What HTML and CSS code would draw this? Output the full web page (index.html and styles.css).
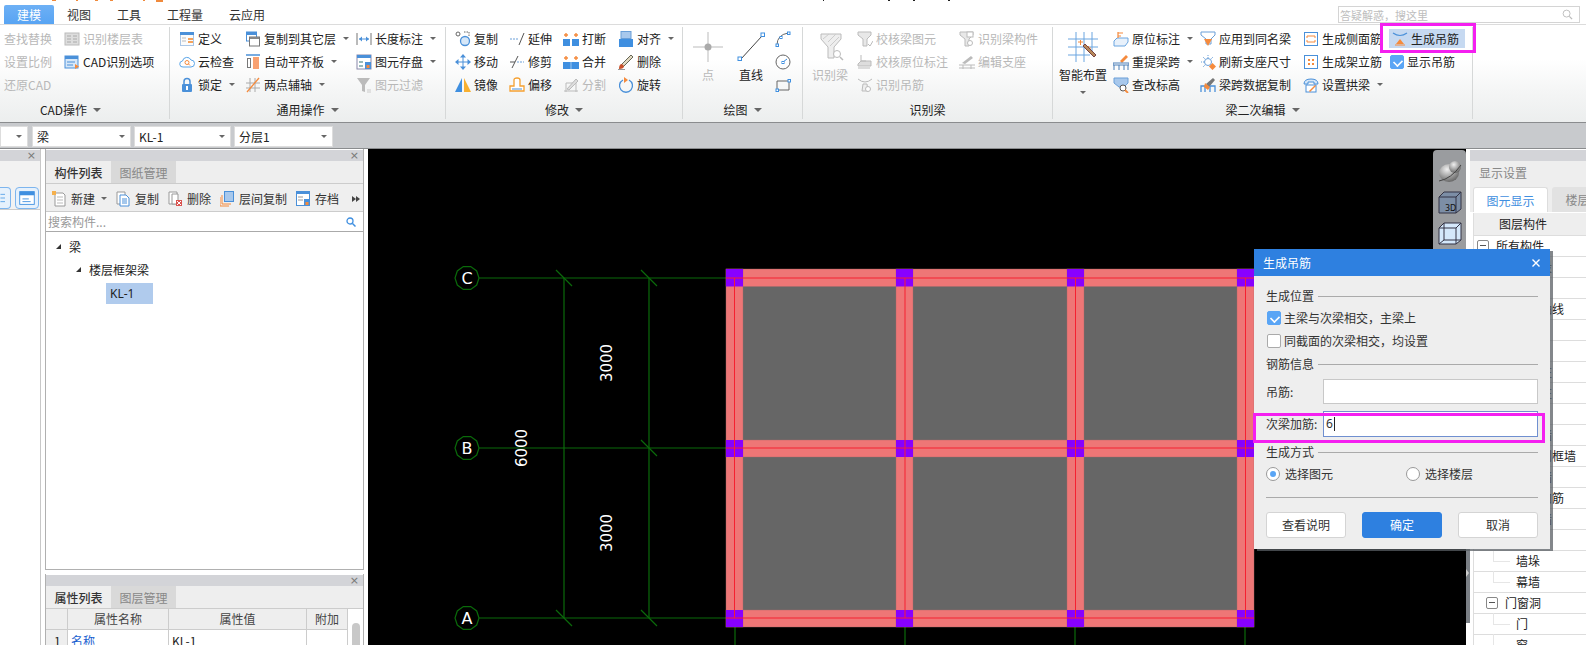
FILE: index.html
```html
<!DOCTYPE html>
<html lang="zh">
<head>
<meta charset="utf-8">
<title>生成吊筋</title>
<link rel="stylesheet" href="styles.css">
</head>
<body>
<svg class="titlebits" viewBox="0 0 1586 3"><path fill="#f08a3c" d="M52 0h4v1h-4zM76 0h2v1h-2zM95 0h3v1h-3zM110 0h3v1h-3zM143 0h2v1h-2zM156 0h7v2h-7z"/><path fill="#222" d="M823 0h1v1h-1zM888 0h2v1h-2zM913 0h2v1h-2zM948 0h2v1h-2z"/></svg>

<header class="tabsbar">
  <div class="tab on">建模</div><div class="tab">视图</div><div class="tab">工具</div><div class="tab">工程量</div><div class="tab">云应用</div>
  <div class="ask"><span>答疑解惑，搜这里</span><svg class="askic" viewBox="0 0 12 12"><circle cx="5" cy="5" r="3.8" fill="none" stroke="#bbb"/><path d="M8 8l3 3" stroke="#bbb" stroke-width="1.4"/></svg></div>
</header>

<section class="ribbon">
  <div class="group g1">
    <div class="rows">
      <div class="col c64">
        <div class="it dis"><span>查找替换</span></div>
        <div class="it dis"><span>设置比例</span></div>
        <div class="it dis"><span>还原CAD</span></div>
      </div>
      <div class="col">
        <div class="it dis"><svg class="ic" viewBox="0 0 16 16"><rect x="1" y="2" width="14" height="12" fill="#ddd" stroke="#bbb"/><path d="M3 5h4M3 8h4M3 11h4M9 5h4M9 8h4M9 11h4" stroke="#aaa"/></svg><span>识别楼层表</span></div>
        <div class="it"><svg class="ic" viewBox="0 0 16 16"><rect x="1" y="2" width="13" height="12" fill="#d6e7f8" stroke="#4a90d9"/><path d="M1 2h13v3H1z" fill="#4a90d9"/><path d="M3 8h8M3 11h6" stroke="#4a90d9"/><path d="M11 10l4 2.500-4 2.500z" fill="#f58a3c"/></svg><span>CAD识别选项</span></div>
      </div>
    </div>
    <div class="glabel gl1">CAD操作<i class="ar lab"></i></div>
  </div>

  <div class="group g2">
    <div class="rows">
      <div class="col c66">
        <div class="it"><svg class="ic" viewBox="0 0 16 16"><rect x="1.500" y="1.500" width="13" height="13" fill="#fbfbfb" stroke="#aac6e6"/><path d="M1 1h14v3H1z" fill="#4a90d9"/><path d="M9 7h5v2H9zM9 10h5v2H9z" fill="#f5a35c"/><path d="M3 7h4M3 10h4" stroke="#bbb"/></svg><span>定义</span></div>
        <div class="it"><svg class="ic" viewBox="0 0 16 16"><path d="M4 13a3 3 0 0 1-.500-6 4.500 4.500 0 0 1 8.500-1 3.500 3.500 0 0 1 0 7z" fill="#fff" stroke="#5aa5e8"/><circle cx="8" cy="8.500" r="2" fill="none" stroke="#f58a3c"/><path d="M9.500 10l1.500 1.500" stroke="#f58a3c"/></svg><span>云检查</span></div>
        <div class="it"><svg class="ic" viewBox="0 0 16 16"><path d="M5 7V4.500a3 3 0 0 1 6 0V7" fill="none" stroke="#4a90d9" stroke-width="1.500"/><rect x="3" y="7" width="10" height="8" rx="1" fill="#4a90d9"/><rect x="7" y="9" width="2" height="4" fill="#fff"/></svg><span>锁定</span><i class="ar"></i></div>
      </div>
      <div class="col c111">
        <div class="it"><svg class="ic" viewBox="0 0 16 16"><rect x="1.500" y="1" width="10" height="9" fill="#fff" stroke="#4a90d9"/><path d="M1 1h11v3H1z" fill="#4a90d9"/><rect x="4.500" y="6" width="10" height="9" fill="#fff" stroke="#777"/><path d="M5 6h9v2H5z" fill="#888"/></svg><span>复制到其它层</span><i class="ar"></i></div>
        <div class="it"><svg class="ic" viewBox="0 0 16 16"><path d="M1 1h14" stroke="#4a90d9" stroke-width="1.500"/><rect x="2.500" y="4.500" width="3" height="9" fill="#fff" stroke="#777"/><rect x="8" y="3" width="6" height="12" fill="#f8a070"/></svg><span>自动平齐板</span><i class="ar"></i></div>
        <div class="it"><svg class="ic" viewBox="0 0 16 16"><path d="M1 6h14M1 11h14M5 1v14M10 1v14" stroke="#aaa"/><path d="M2 15L14 1" stroke="#f58a3c" stroke-width="1.300"/></svg><span>两点辅轴</span><i class="ar"></i></div>
      </div>
      <div class="col">
        <div class="it"><svg class="ic" viewBox="0 0 16 16"><path d="M1 2v12M15 2v12" stroke="#777"/><path d="M3 8h10" stroke="#4a90d9"/><path d="M3 8l3-2.500v5zM13 8l-3-2.500v5z" fill="#4a90d9"/></svg><span>长度标注</span><i class="ar"></i></div>
        <div class="it"><svg class="ic" viewBox="0 0 16 16"><rect x="1" y="1" width="14" height="14" fill="#fff" stroke="#88a"/><path d="M1 1h14v3H1z" fill="#4a90d9"/><path d="M3 7h4v2H3zM3 11h4v2H3z" fill="#9bb"/><rect x="9" y="8" width="6" height="7" fill="#4a90d9"/><rect x="10.500" y="11" width="3" height="3" fill="#f58a3c"/></svg><span>图元存盘</span><i class="ar"></i></div>
        <div class="it dis"><svg class="ic" viewBox="0 0 16 16"><path d="M1 1h13L9 8v7l-3-1V8z" fill="#bbb"/><path d="M11 13h4M11 15h4" stroke="#ccc"/></svg><span>图元过滤</span></div>
      </div>
    </div>
    <div class="glabel">通用操作<i class="ar lab"></i></div>
  </div>

  <div class="group g3">
    <div class="rows">
      <div class="col c54">
        <div class="it"><svg class="ic" viewBox="0 0 16 16"><circle cx="10" cy="10" r="4.500" fill="#d6e7f8" stroke="#4a90d9" stroke-width="1.300"/><circle cx="3" cy="3" r="2" fill="none" stroke="#666"/><path d="M9 1h5v4" fill="none" stroke="#666" stroke-dasharray="1.500 1"/></svg><span>复制</span></div>
        <div class="it"><svg class="ic" viewBox="0 0 16 16"><path d="M8 3v10M3 8h10" stroke="#4a90d9"/><path d="M8 0l3 3.500H5zM8 16l3-3.500H5zM0 8l3.500-3v6zM16 8l-3.500-3v6z" fill="#4a90d9"/></svg><span>移动</span></div>
        <div class="it"><svg class="ic" viewBox="0 0 16 16"><path d="M7 1v14H0z" fill="#3f8fe0"/><path d="M9 1v14h7z" fill="#f8b030"/></svg><span>镜像</span></div>
      </div>
      <div class="col c54">
        <div class="it"><svg class="ic" viewBox="0 0 16 16"><path d="M1 8h9" stroke="#6a9fd8" stroke-dasharray="2 1"/><path d="M10 14l5-12" stroke="#555"/></svg><span>延伸</span></div>
        <div class="it"><svg class="ic" viewBox="0 0 16 16"><path d="M1 8h5" stroke="#555"/><path d="M8 8h7" stroke="#6a9fd8" stroke-dasharray="2 1"/><path d="M3 14l6-12" stroke="#555"/></svg><span>修剪</span></div>
        <div class="it"><svg class="ic" viewBox="0 0 16 16"><path d="M1 14V9h4V3q0-2 3-2t3 2v6h4v5z" fill="#fff" stroke="#f5a030" stroke-width="1.300"/><path d="M3 12h10" stroke="#4a90d9"/></svg><span>偏移</span></div>
      </div>
      <div class="col c55">
        <div class="it"><svg class="ic" viewBox="0 0 16 16"><path d="M0 8h7v7H0zM9 8h7v7H9z" fill="#3f8fe0"/><path d="M3 2v4M1 4h4M13 2v4M11 4h4" stroke="#f58a3c" stroke-width="1.400"/></svg><span>打断</span></div>
        <div class="it"><svg class="ic" viewBox="0 0 16 16"><path d="M0 8h16v7H0z" fill="#3f8fe0"/><path d="M8 8v7" stroke="#9cc6f0"/><path d="M3 2v4M1 4h4M13 2v4M11 4h4" stroke="#f58a3c" stroke-width="1.400"/></svg><span>合并</span></div>
        <div class="it dis"><svg class="ic" viewBox="0 0 16 16"><path d="M1 14h14M3 15V6h10v9" fill="none" stroke="#bbb"/><path d="M4 12L13 2l2 2-9 9z" fill="#ddd" stroke="#bbb"/></svg><span>分割</span></div>
      </div>
      <div class="col">
        <div class="it"><svg class="ic" viewBox="0 0 16 16"><rect x="3" y="0.500" width="10" height="7" fill="#a8c8ec" stroke="#6a9fd8"/><rect x="1" y="8" width="14" height="8" fill="#3f8fe0"/></svg><span>对齐</span><i class="ar"></i></div>
        <div class="it"><svg class="ic" viewBox="0 0 16 16"><path d="M3 11L13 1l2 2L5 13z" fill="#e0d8c0" stroke="#665"/><path d="M1 15q0-5 3-5l2 2q0 3-5 3z" fill="#c8502a"/><path d="M0 16h7" stroke="#333"/></svg><span>删除</span></div>
        <div class="it"><svg class="ic" viewBox="0 0 16 16"><path d="M5 3a6.500 6.500 0 1 0 6 0" fill="none" stroke="#4a90d9" stroke-width="1.300"/><path d="M6 0v6l4-3z" fill="#f58a3c"/></svg><span>旋转</span></div>
      </div>
    </div>
    <div class="glabel">修改<i class="ar lab"></i></div>
  </div>

  <div class="group g4">
    <div class="rows">
      <div class="big w40 dis">
        <svg class="bigic" viewBox="0 0 30 30"><path d="M15 0v30M0 15h30" stroke="#bbb"/><circle cx="15" cy="15" r="3.500" fill="#aaa"/></svg>
        <span>点</span>
      </div>
      <div class="big w40 gapl3">
        <svg class="bigic" viewBox="0 0 30 30"><path d="M5 27L26 4" stroke="#444"/><rect x="2" y="25" width="3.500" height="3.500" fill="#fff" stroke="#3f8fe0"/><rect x="25" y="1" width="3.500" height="3.500" fill="#fff" stroke="#3f8fe0"/></svg>
        <span>直线</span>
      </div>
      <div class="col gapl4">
        <div class="it"><svg class="ic" viewBox="0 0 16 16"><path d="M2 14Q2 4 13 2" fill="none" stroke="#666"/><rect x="1" y="13" width="2.500" height="2.500" fill="#fff" stroke="#3f8fe0"/><rect x="12.500" y="1" width="2.500" height="2.500" fill="#fff" stroke="#3f8fe0"/><rect x="5" y="5.500" width="2" height="2" fill="#fff" stroke="#3f8fe0"/></svg></div>
        <div class="it"><svg class="ic" viewBox="0 0 16 16"><circle cx="8" cy="8" r="7" fill="none" stroke="#666"/><path d="M8 8l4-3" stroke="#3f8fe0"/><rect x="7" y="7.500" width="2" height="2" fill="#fff" stroke="#3f8fe0"/></svg></div>
        <div class="it"><svg class="ic" viewBox="0 0 16 16"><path d="M2 4h12v9H2z" fill="none" stroke="#666"/><rect x="1" y="12" width="2.500" height="2.500" fill="#fff" stroke="#3f8fe0"/><rect x="13" y="2.500" width="2.500" height="2.500" fill="#fff" stroke="#3f8fe0"/></svg></div>
      </div>
    </div>
    <div class="glabel">绘图<i class="ar lab"></i></div>
  </div>

  <div class="group g5">
    <div class="rows">
      <div class="big w36 mr9 dis">
        <svg class="bigic bigfn" viewBox="0 0 30 30"><path d="M6 2h20v5l-7 8v11h-6V15L6 7z" fill="#eee" stroke="#bbb"/><path d="M8 7l6-5M13 10l8-8M15 14l9-9" stroke="#ccc"/><circle cx="22" cy="22" r="3.500" fill="#fff" stroke="#bbb"/><path d="M25 25l3 3" stroke="#bbb" stroke-width="1.500"/></svg>
        <span>识别梁</span>
      </div>
      <div class="col c102">
        <div class="it dis"><svg class="ic" viewBox="0 0 16 16"><path d="M1 1h13v3l-4 4v7H6V8L1 4z" fill="#e8e8e8" stroke="#bbb"/><path d="M11 13l2 2 3-5" fill="none" stroke="#bbb"/></svg><span>校核梁图元</span></div>
        <div class="it dis"><svg class="ic" viewBox="0 0 16 16"><path d="M1 10l3-3h10v5H1z" fill="#ddd" stroke="#bbb"/><path d="M4 1v6h5" fill="none" stroke="#bbb"/><path d="M1 14h12" stroke="#bbb"/></svg><span>校核原位标注</span></div>
        <div class="it dis"><svg class="ic" viewBox="0 0 16 16"><path d="M1 2q7 6 14 0" fill="none" stroke="#bbb"/><path d="M6 7h4l1 7H5z" fill="#eee" stroke="#bbb"/><circle cx="11" cy="12" r="2.500" fill="#fff" stroke="#bbb"/></svg><span>识别吊筋</span></div>
      </div>
      <div class="col">
        <div class="it dis"><svg class="ic" viewBox="0 0 16 16"><path d="M1 1h13v3l-4 4v7H6V8L1 4z" fill="#e8e8e8" stroke="#bbb"/><rect x="8" y="1" width="6" height="5" fill="#fff" stroke="#bbb"/><circle cx="11" cy="12" r="2.500" fill="#fff" stroke="#bbb"/></svg><span>识别梁构件</span></div>
        <div class="it dis"><svg class="ic" viewBox="0 0 16 16"><path d="M3 9l9-7 2 2-8 6z" fill="#bbb"/><path d="M0 11h16M0 14h16M4 11v4M12 11v4" stroke="#bbb"/></svg><span>编辑支座</span></div>
      </div>
    </div>
    <div class="glabel">识别梁</div>
  </div>

  <div class="group g6">
    <div class="rows">
      <div class="big w48 mr6">
        <svg class="bigic" viewBox="0 0 30 30"><path d="M0 7h30M0 15h30M0 23h22M8 0v30M16 0v30M24 0v22" stroke="#6aa5e0"/><path d="M10 10h5M12.500 8v5M18 16h5M20.500 14v5" stroke="#f58a3c"/><path d="M17 12l11 11-2 2-11-11z" fill="#b88a5a" stroke="#744"/></svg>
        <span>智能布置</span>
        <i class="ar under"></i>
      </div>
      <div class="col c87">
        <div class="it"><svg class="ic" viewBox="0 0 16 16"><path d="M1 10l3-3h11v4l-3 4H1z" fill="#e8f1fb" stroke="#6aa5e0"/><path d="M5 1v6M5 2h5M5 5h3" stroke="#f58a3c" stroke-width="1.200" fill="none"/></svg><span>原位标注</span><i class="ar"></i></div>
        <div class="it"><svg class="ic" viewBox="0 0 16 16"><path d="M7 7l6-6 2 2-6 6z" fill="#f58a3c"/><path d="M0 9h16v2H0zM1 11v5M6 11v5M11 11v5M15 11v5" fill="#fff" stroke="#4a7fb8"/></svg><span>重提梁跨</span><i class="ar"></i></div>
        <div class="it"><svg class="ic" viewBox="0 0 16 16"><path d="M1 1h14v5L11 10H6L1 6z" fill="#a8c8ec" stroke="#6a9fd8"/><circle cx="10" cy="11" r="3" fill="#fff" stroke="#555"/><path d="M12 13l3 3" stroke="#f58a3c" stroke-width="1.800"/></svg><span>查改标高</span></div>
      </div>
      <div class="col c103">
        <div class="it"><svg class="ic" viewBox="0 0 16 16"><path d="M1 1h14v3l-4 4v5H6V8L1 4z" fill="#fff" stroke="#6a9fd8"/><path d="M4 8h8l-4 7z" fill="#f58a3c"/></svg><span>应用到同名梁</span></div>
        <div class="it"><svg class="ic" viewBox="0 0 16 16"><path d="M8 1v3M1 8h3M3 3l2 2M13 3l-2 2M3 13l2-2" stroke="#6a9fd8" stroke-dasharray="1 1"/><circle cx="8" cy="8" r="3.500" fill="#fff" stroke="#6a9fd8"/><rect x="10" y="10" width="5" height="5" transform="rotate(45 12.500 12.500)" fill="#f58a3c"/></svg><span>刷新支座尺寸</span></div>
        <div class="it"><svg class="ic" viewBox="0 0 16 16"><path d="M1 15V9h14v6M5 9v6M10 9v6" fill="none" stroke="#4a90d9" stroke-width="1.300"/><path d="M6 7l7-6 2 2-6 7z" fill="#777"/><path d="M5 6l5 4-2 3-4-3z" fill="#f58a3c"/></svg><span>梁跨数据复制</span></div>
      </div>
      <div class="col c86">
        <div class="it"><svg class="ic" viewBox="0 0 16 16"><rect x="1.500" y="1.500" width="13" height="13" fill="#fff" stroke="#4a90d9"/><path d="M4 5h8v2M4 5v2M4 11h8V9M4 11V9" fill="none" stroke="#f58a3c"/></svg><span>生成侧面筋</span></div>
        <div class="it"><svg class="ic" viewBox="0 0 16 16"><rect x="1.500" y="1.500" width="13" height="13" fill="#fff" stroke="#4a90d9"/><path d="M5 5h2v2H5zM9 5h2v2H9zM5 9h2v2H5zM9 9h2v2H9z" fill="#f58a3c"/></svg><span>生成架立筋</span></div>
        <div class="it"><svg class="ic" viewBox="0 0 16 16"><path d="M1 7q0-5 7-5t7 5h-4V5H5v2z" fill="#d6e7f8" stroke="#4a90d9"/><rect x="3" y="8" width="10" height="7" fill="#fff" stroke="#4a90d9"/><path d="M6 14l6-6 1 1-6 6z" fill="#f58a3c"/></svg><span>设置拱梁</span><i class="ar"></i></div>
      </div>
      <div class="col">
        <div class="it hl"><svg class="ic" viewBox="0 0 16 16"><path d="M1 2q7 5 14 0" fill="none" stroke="#4a90d9" stroke-width="1.200"/><path d="M8 8l4 5H4z" fill="#f58a3c"/><path d="M3 14h10" stroke="#f58a3c"/></svg><span>生成吊筋</span></div>
        <div class="it chk"><span class="box on"></span><span>显示吊筋</span></div>
      </div>
    </div>
    <div class="glabel">梁二次编辑<i class="ar lab"></i></div>
  </div>
</section>

<section class="combos">
  <div class="combo cw30"><i class="ar"></i></div>
  <div class="combo cw99"><span>梁</span><i class="ar"></i></div>
  <div class="combo cw97"><span>KL-1</span><i class="ar"></i></div>
  <div class="combo cw99"><span>分层1</span><i class="ar"></i></div>
</section>

<main class="main">
  <aside class="leftdock">
    <div class="phead"><span class="px">×</span></div>
    <div class="ldtools">
      <span class="ldbtn ldbtn1"><svg viewBox="0 0 10 22" class="ldic"><path d="M0 7h5M0 11h5M0 15h5" stroke="#5aa5e8"/></svg></span>
      <span class="ldbtn ldbtn2"><svg viewBox="0 0 24 22" class="ldic2"><rect x="4" y="4" width="16" height="14" fill="#fff" stroke="#3f8fe0"/><path d="M4 4h16v4H4z" fill="#3f8fe0"/><path d="M7 12h7M7 15h9" stroke="#3f8fe0"/></svg></span>
    </div>
  </aside>

  <div class="docks">
    <div class="panel pcomp">
      <div class="phead"><span class="px">×</span></div>
      <div class="ptabs"><div class="ptab on">构件列表</div><div class="ptab">图纸管理</div></div>
      <div class="ptools">
        <div class="tb"><svg class="tic" viewBox="0 0 14 16"><path d="M3 2h8l2 2v11H3z" fill="#fff" stroke="#999"/><path d="M5 6h6M5 9h6M5 12h6" stroke="#bbb"/><path d="M0 0h4v4H0z" fill="#f5b04c"/></svg><span>新建</span><i class="ar"></i></div>
        <div class="tb"><svg class="tic" viewBox="0 0 14 16"><path d="M1 1h8v12H1z" fill="#fff" stroke="#999"/><path d="M4 4h6l3 3v8H4z" fill="#fff" stroke="#4a90d9"/><path d="M6 8h5M6 10h5M6 12h5" stroke="#4a90d9"/></svg><span>复制</span></div>
        <div class="tb"><svg class="tic" viewBox="0 0 14 16"><path d="M1 1h8v12H1z" fill="#fff" stroke="#999"/><path d="M4 3h6v10H4z" fill="#fff" stroke="#999"/><rect x="8" y="9" width="6" height="6" fill="#d9534f"/><path d="M9 10l4 4M13 10l-4 4" stroke="#fff"/></svg><span>删除</span></div>
        <div class="tb"><svg class="tic" viewBox="0 0 14 16"><path d="M0 6v9h9M2 4v9h9" fill="none" stroke="#f58a3c"/><rect x="4.500" y="0.500" width="9" height="10" fill="#a8c8ec" stroke="#4a90d9"/></svg><span>层间复制</span></div>
        <div class="tb"><svg class="tic" viewBox="0 0 14 16"><rect x="0.500" y="0.500" width="13" height="14" fill="#fff" stroke="#4a90d9"/><path d="M0 0h14v3H0z" fill="#4a90d9"/><path d="M2 6h5M2 9h5" stroke="#999"/><rect x="8" y="8" width="6" height="7" fill="#4a90d9"/><rect x="9.500" y="11" width="3" height="3" fill="#f58a3c"/></svg><span>存档</span></div>
        <div class="more"><i class="mtri"></i><i class="mtri"></i></div>
      </div>
      <div class="psearch"><span>搜索构件...</span><svg class="psic" viewBox="0 0 10 10"><circle cx="4" cy="4" r="3" fill="none" stroke="#3f8fe0" stroke-width="1.300"/><path d="M6.500 6.500L9.500 9.500" stroke="#3f8fe0" stroke-width="1.500"/></svg></div>
      <div class="tree">
        <div class="node n0"><i class="tw"></i>梁</div>
        <div class="node n1"><i class="tw"></i>楼层框架梁</div>
        <div class="leaf">KL-1</div>
      </div>
    </div>
    <div class="panel pattr">
      <div class="phead"><span class="px">×</span></div>
      <div class="ptabs"><div class="ptab on">属性列表</div><div class="ptab">图层管理</div></div>
      <div class="attrwrap">
        <div class="attrgrid">
          <div class="th"></div><div class="th">属性名称</div><div class="th">属性值</div><div class="th">附加</div>
          <div class="td tdnum">1</div><div class="td tdlink">名称</div><div class="td">KL-1</div><div class="td"></div>
        </div>
        <div class="scroll"><div class="thumb"></div></div>
      </div>
    </div>
  </div>

  <div class="canvas">
    <svg class="cad" viewBox="368 149 1098 496">
      <defs><polygon id="deca" points="12,0 9.700,7.050 3.700,11.400 -3.700,11.400 -9.700,7.050 -12,0 -9.700,-7.050 -3.700,-11.400 3.700,-11.400 9.700,-7.050" fill="none" stroke="#0a6a0a" stroke-width="1.200"/></defs>
      <g stroke="#0a6a0a" stroke-width="1.200" fill="none">
        <path d="M479 278H726M479 448H726M479 618H726M564 278V618M649 278V618M735 618V645M905 618V645M1075 618V645M1245 618V645"/>
        <path d="M556 270L572 286M641 270L657 286M641 440L657 456M556 610L572 626M641 610L657 626"/>
      </g>
      <use href="#deca" x="467" y="278"/><use href="#deca" x="467" y="448"/><use href="#deca" x="467" y="618"/>
      <g class="axis"><text x="467" y="284">C</text><text x="467" y="454">B</text><text x="467" y="624">A</text></g>
      <g class="dim">
        <text transform="translate(612 363) rotate(-90)">3000</text>
        <text transform="translate(527 448) rotate(-90)">6000</text>
        <text transform="translate(612 533) rotate(-90)">3000</text>
      </g>
      <rect x="726" y="269" width="528" height="358" fill="#666"/>
      <g fill="#ee7676" stroke="#a56a6a" stroke-width="0.400">
        <rect x="726" y="269" width="528" height="17.500"/><rect x="726" y="440" width="528" height="17"/><rect x="726" y="610" width="528" height="17"/>
        <rect x="726" y="269" width="17" height="358"/><rect x="896" y="269" width="17" height="358"/><rect x="1067" y="269" width="17" height="358"/><rect x="1237" y="269" width="17" height="358"/>
      </g>
      <path fill="#8800ff" d="M726 269h17v17.500h-17zM896 269h17v17.500h-17zM1067 269h17v17.500h-17zM1237 269h17v17.500h-17zM726 440h17v17h-17zM896 440h17v17h-17zM1067 440h17v17h-17zM1237 440h17v17h-17zM726 610h17v17h-17zM896 610h17v17h-17zM1067 610h17v17h-17zM1237 610h17v17h-17z"/>
      <path d="M726 278H1254M726 448H1254M726 618H1254M734.500 278V618M905 278V618M1075.500 278V618M1245.500 278V618" stroke="#f52030" stroke-width="1" fill="none"/>
    </svg>
    <div class="sidebar">
      <svg class="sbic" viewBox="0 0 24 24"><defs><radialGradient id="sph" cx="0.400" cy="0.300" r="0.800"><stop offset="0" stop-color="#f0f0f0"/><stop offset="1" stop-color="#555"/></radialGradient></defs><ellipse cx="11" cy="14" rx="10" ry="9" fill="url(#sph)"/><circle cx="17" cy="8" r="6" fill="url(#sph)"/><path d="M1 22q12-2 22-16" fill="none" stroke="#444"/></svg>
      <svg class="sbic" viewBox="0 0 24 24"><path d="M1 7l5-5h17v17l-5 4H1z" fill="#7c8ea6" stroke="#334"/><path d="M1 7h17v16M18 7l5-5" fill="none" stroke="#334"/><text class="s3d" x="7" y="21">3D</text></svg>
      <svg class="sbic" viewBox="0 0 24 24"><path d="M1 7l5-5h17v17l-5 4H1z" fill="#d4e8fb" stroke="#334"/><path d="M1 7h17v16M18 7l5-5M6 2v17H23M6 19l-5 4" fill="none" stroke="#334"/></svg>
    </div>
  </div>

  <div class="split"><div class="splitgray"><i class="splittri"></i></div></div>

  <aside class="rightdock">
    <div class="phead"></div>
    <div class="rtitle">显示设置</div>
    <div class="rtabs"><div class="rtab on">图元显示</div><div class="rtab">楼层显示</div></div>
    <div class="rtable">
      <div class="rth">图层构件</div>
      <div class="rr rp"><i class="mn"></i>所有构件</div>
      <div class="rr r1">施工段</div>
      <div class="rr r1">轴线</div>
      <div class="rr rl">辅助轴线</div>
      <div class="rr r1">柱</div>
      <div class="rr rl">柱</div>
      <div class="rr rl">构造柱</div>
      <div class="rr rl">砌体柱</div>
      <div class="rr r1">墙</div>
      <div class="rr rl">剪力墙</div>
      <div class="rr rl">人防门框墙</div>
      <div class="rr rl">砌体墙</div>
      <div class="rr rl">砌体加筋</div>
      <div class="rr rl">保温墙</div>
      <div class="rr rl">暗梁</div>
      <div class="rr rl">墙垛</div>
      <div class="rr rl">幕墙</div>
      <div class="rr rg"><i class="mn"></i>门窗洞</div>
      <div class="rr rl">门</div>
      <div class="rr rl">窗</div>
    </div>
  </aside>
</main>

<div class="dialog">
  <div class="dtitle"><span>生成吊筋</span><svg class="dx" viewBox="0 0 8 8"><path d="M0.500 0.500l7 7M7.500 0.500l-7 7" stroke="#fff" stroke-width="1.400"/></svg></div>
  <div class="dbody">
    <div class="legend l1"><span>生成位置</span></div>
    <div class="copt m4"><span class="box on"></span><span>主梁与次梁相交，主梁上</span></div>
    <div class="copt m5"><span class="box"></span><span>同截面的次梁相交，均设置</span></div>
    <div class="legend l2"><span>钢筋信息</span></div>
    <div class="frow fr1"><label>吊筋:</label><div class="inp"></div></div>
    <div class="frow fr2"><label>次梁加筋:</label><div class="inp act">6<i class="caret"></i></div></div>
    <div class="legend l3"><span>生成方式</span></div>
    <div class="radios">
      <div class="ropt r140"><span class="rd on"></span><span>选择图元</span></div>
      <div class="ropt"><span class="rd"></span><span>选择楼层</span></div>
    </div>
    <div class="dhr"></div>
    <div class="btns"><div class="btn">查看说明</div><div class="btn pri">确定</div><div class="btn">取消</div></div>
  </div>
  <div class="mark markin"></div>
</div>
<div class="mark markrib"></div>
</body>
</html>
```

FILE: styles.css
```css
* { box-sizing: border-box; }
html, body { margin: 0; height: 645px; overflow: hidden; }
body {
  position: relative;
  width: 1586px;
  background: #fff;
  color: #222;
  font: 12px/16px "Noto Sans CJK SC", "Noto Sans", sans-serif;
}
i { display: block; font-style: normal; }
svg { display: block; flex: none; }
.titlebits { position: absolute; left: 0; top: 0; width: 1586px; height: 3px; }

/* tab strip */
.tabsbar { display: flex; height: 25px; padding-left: 4px; border-bottom: 1px solid #dcdcdc; background: #fff; }
.tab { height: 19px; margin-top: 5px; padding: 0 13px; line-height: 19px; color: #333; }
.tab.on { background: linear-gradient(#6db0f5, #58a4f3); color: #fff; border-radius: 2px 2px 0 0; }
.ask { display: flex; align-items: center; justify-content: space-between; width: 242px; height: 17px; margin: 6px 6px 0 auto; padding: 0 6px 0 1px; border: 1px solid #d4d4d4; font-size: 11px; color: #bdbdbd; }
.askic { width: 11px; height: 11px; }

/* ribbon */
.ribbon { display: flex; height: 97px; background: linear-gradient(#fff 35%, #f4f5f5 70%, #eceeee); }
.group { display: flex; flex-direction: column; height: 92px; margin-top: 2px; padding-top: 0; border-right: 1px solid #d6d8d8; }
.g1 { width: 170px; }
.g2 { width: 276px; padding-left: 9px; }
.g3 { width: 237px; padding-left: 9px; }
.g4 { width: 120px; padding-left: 5px; }
.g5 { width: 250px; padding-left: 9px; }
.g6 { width: 420px; padding-left: 6px; }
.g2 .glabel, .g3 .glabel, .g5 .glabel { margin-left: -9px; }
.g4 .glabel { margin-left: -5px; }
.g6 .glabel { margin-left: -6px; }
.rows { display: flex; height: 69px; }
.col { display: flex; flex-direction: column; }
.c64 { width: 64px; padding-left: 4px; }
.c66 { width: 66px; }
.c111 { width: 111px; }
.c54 { width: 54px; }
.c55 { width: 55px; }
.c102 { width: 102px; }
.c87 { width: 87px; }
.c103 { width: 103px; }
.c86 { width: 86px; }
.it { display: flex; align-items: center; gap: 3px; height: 23px; white-space: nowrap; color: #222; }
.ic { width: 16px; height: 16px; }
.dis, .dis .it, .it.dis { color: #b8b8b8; }
.ar { width: 0; height: 0; margin-left: 4px; border: solid transparent; border-width: 3px 3px 0; border-top-color: #666; }
.ar.lab { margin-left: 6px; border-width: 4px 4px 0; }
.ar.under { margin: 7px 0 0; }
.glabel { display: flex; align-items: center; justify-content: center; height: 18px; margin-top: 5px; color: #222; }
.gl1 { padding-right: 28px; }
.big { display: flex; flex-direction: column; align-items: center; }
.big span { white-space: nowrap; line-height: 18px; }
.bigic { width: 30px; height: 30px; margin: 5px 0 4px; }
.w40 { width: 40px; }
.w36 { width: 36px; }
.w48 { width: 48px; }
.mr9 { margin-right: 9px; }
.mr6 { margin-right: 6px; }
.gapl3 { margin-left: 3px; }
.gapl4 { margin-left: 4px; }
.hl { height: 19px; margin: 2px 0; padding: 0 6px 0 3px; background: #c6d9f1; }
.chk { padding-left: 1px; }
.box { flex: none; display: block; position: relative; width: 14px; height: 14px; border: 1px solid #aaa; border-radius: 2px; background: #fff; }
.box.on { border-color: #5aa5f5; background: #5aa5f5; }
.box.on::after { content: ""; position: absolute; left: 3px; top: 1px; width: 6px; height: 8px; border: solid #fff; border-width: 0 2px 2px 0; transform: rotate(45deg) scale(.8); }

/* combos strip */
.combos { display: flex; gap: 3px; height: 27px; padding-top: 3px; background: #c8cacd; border-top: 1px solid #8a8c8e; border-bottom: 1px solid #8a8c8e; }
.combo { display: flex; align-items: center; justify-content: space-between; height: 21px; padding: 0 5px 0 4px; background: #fff; border: 1px solid #ddd; }
.cw30 { width: 28px; justify-content: flex-end; }
.cw97 { width: 97px; }
.cw99 { width: 99px; }
.combo:first-child + .combo { margin-left: 1px; }

/* main */
.main { display: flex; height: 496px; padding: 0; }
.phead { display: flex; justify-content: flex-end; align-items: center; height: 11px; padding-right: 4px; margin-top: 1px; background: #d3d4d8; }
.px { font: 11px/11px "DejaVu Sans", sans-serif; color: #777; }
.leftdock { width: 41px; height: 100%; border-right: 1px solid #c8c8c8; }
.ldtools { display: flex; gap: 4px; height: 49px; padding-top: 26px; background: #f2f2f2; border-bottom: 1px solid #ccc; }
.ldbtn { display: block; height: 22px; background: #e6f1fc; border: 1px solid #7db5ee; border-radius: 4px; }
.ldbtn1 { width: 11px; border-left: 0; border-radius: 0 4px 4px 0; }
.ldbtn2 { width: 24px; }
.ldic { width: 10px; height: 20px; }
.ldic2 { width: 22px; height: 20px; }
.docks { display: flex; flex-direction: column; gap: 4px; width: 319px; margin-left: 4px; }
.panel { border: solid #b0b0b0; border-width: 0 1px 1px; background: #fff; overflow: hidden; }
.pcomp { height: 421px; flex: none; }
.pattr { flex: 1; border-bottom: 0; }
.ptabs { display: flex; height: 23px; background: #eee; border-bottom: 1px solid #ccc; }
.ptab { width: 65px; padding-top: 2px; text-align: center; line-height: 20px; color: #888; background: #d9d9d9; }
.ptab.on { color: #333; font-weight: 500; background: #eee; }
.ptools { display: flex; align-items: center; height: 28px; padding: 2px 3px 0 6px; background: #efefef; border-bottom: 1px solid #ccc; }
.tb { display: flex; align-items: center; gap: 5px; margin-right: 9px; color: #333; }
.tb .ar { margin-left: 1px; }
.tic { width: 14px; height: 16px; }
.more { display: flex; margin-left: auto; }
.mtri { width: 0; height: 0; border: solid transparent; border-width: 3px 0 3px 4px; border-left-color: #444; }
.psearch { display: flex; align-items: center; justify-content: space-between; height: 20px; padding: 0 7px 0 2px; color: #999; border-bottom: 1px solid #aaa; }
.psic { width: 10px; height: 10px; }
.tree { padding-top: 3px; }
.node { display: flex; align-items: center; height: 23px; }
.n0 { padding-left: 10px; }
.n1 { padding-left: 30px; }
.tw { width: 0; height: 0; margin-right: 8px; border: solid transparent; border-width: 0 0 5px 5px; border-bottom-color: #333; }
.leaf { width: 47px; height: 21px; margin: 2px 0 0 60px; padding-left: 4px; line-height: 21px; background: #b0cbed; font-family: "Noto Sans", sans-serif; }
.attrwrap { display: flex; background: #fff; }
.attrgrid { display: grid; grid-template-columns: 22px 101px 138px 41px; width: 302px; grid-auto-rows: 21px; }
.th { text-align: center; line-height: 20px; background: #eee; color: #444; border-right: 1px solid #ccc; border-bottom: 1px solid #ccc; }
.td { padding-left: 3px; line-height: 21px; border-right: 1px solid #ccc; }
.tdnum { padding-left: 8px; background: #eee; }
.tdlink { color: #1a5fd0; }
.scroll { flex: 1; padding: 14px 0 0 4px; }
.thumb { width: 8px; height: 60px; border-radius: 4px; background: #c8c8c8; }

/* canvas */
.canvas { position: relative; width: 1098px; height: 100%; margin-left: 4px; background: #000; overflow: hidden; }
.cad { width: 1098px; height: 496px; }
.axis text { fill: #fff; font: 16px "DejaVu Sans", sans-serif; text-anchor: middle; }
.dim text { fill: #fff; font: 15px "DejaVu Sans", sans-serif; text-anchor: middle; }
.sidebar { position: absolute; right: 0; top: 1px; display: flex; flex-direction: column; align-items: center; gap: 7px; width: 33px; height: 240px; padding-top: 9px; background: #9a9c9f; border-radius: 4px 4px 0 0; }
.sbic { width: 24px; height: 24px; }
.s3d { font: 8px "DejaVu Sans", sans-serif; fill: #111; }
.split { width: 4px; height: 100%; background: #fff; }
.splitgray { position: relative; height: 474px; margin-top: 0; background: linear-gradient(#fff 40%, #7a7f85 40%); }
.splittri { position: absolute; left: 0; top: 420px; width: 0; height: 0; border: solid transparent; border-width: 4px 0 4px 3px; border-left-color: #ccc; }

/* right dock */
.rightdock { width: 116px; height: 100%; background: #fff; overflow: hidden; }
.rtitle { height: 26px; padding: 2px 0 0 9px; line-height: 20px; color: #888; background: #eee; }
.rtabs { display: flex; gap: 4px; height: 25px; padding-left: 3px; background: #eee; }
.rtab { flex: none; width: 75px; line-height: 25px; text-align: center; color: #888; background: #e2e2e2; border-radius: 3px 3px 0 0; }
.rtab.on { color: #3f8fe0; background: #fff; border: 1px solid #ddd; border-bottom: 0; }
.rtable { margin-left: 3px; width: 200px; border-left: 1px solid #ddd; }
.rth { width: 113px; height: 23px; padding-right: 15px; margin-top: 1px; text-align: center; line-height: 22px; background: #eee; border-bottom: 1px solid #ddd; }
.rr { display: flex; align-items: center; width: 113px; height: 21px; white-space: nowrap; border-bottom: 1px solid #ddd; overflow: visible; }
.rp { padding-left: 3px; }
.rg { padding-left: 12px; }
.mn { position: relative; flex: none; width: 12px; height: 12px; margin-right: 7px; border: 1px solid #888; border-radius: 2px; }
.mn::after { content: ""; position: absolute; left: 2px; top: 4px; width: 6px; height: 1px; background: #555; }
.r1, .rl { padding-left: 42px; position: relative; }
.rl::before { content: ""; position: absolute; left: 19px; top: -1px; width: 16px; height: 11px; border: solid #e6e6e6; border-width: 0 0 1px 1px; }

/* dialog */
.dialog { position: absolute; left: 1254px; top: 249px; width: 296px; height: 300px; background: #eee; box-shadow: 3px 2px 0 rgba(90,95,100,.75); }
.dtitle { display: flex; align-items: center; justify-content: space-between; height: 27px; padding: 0 10px 0 9px; color: #fff; background: #2e80e0; }
.dx { width: 8px; height: 8px; }
.dbody { padding: 11px 12px 0; }
.legend { display: flex; align-items: center; gap: 4px; height: 18px; color: #333; }
.legend::after { content: ""; flex: 1; height: 1px; background: #aaa; }
.l2 { margin-top: 5px; }
.l3 { margin-top: 6px; }
.copt { display: flex; align-items: center; gap: 3px; height: 18px; padding-left: 1px; color: #333; }
.m4 { margin-top: 4px; }
.m5 { margin-top: 5px; }
.frow { display: flex; align-items: center; color: #333; }
.frow label { width: 57px; white-space: nowrap; }
.fr1 { height: 25px; margin-top: 6px; }
.fr2 { height: 26px; margin-top: 7px; }
.inp { display: flex; align-items: center; flex: 1; height: 100%; padding-left: 2px; background: #fff; border: 1px solid #c8c8c8; font-family: "Noto Sans", sans-serif; }
.inp.act { border-color: #6f8fd0; }
.caret { width: 1px; height: 14px; margin-left: 1px; background: #222; }
.radios { display: flex; height: 18px; margin-top: 4px; color: #333; }
.ropt { display: flex; align-items: center; gap: 5px; }
.r140 { width: 140px; }
.rd { position: relative; display: block; flex: none; width: 14px; height: 14px; border: 1px solid #999; border-radius: 50%; background: #fff; }
.rd.on::after { content: ""; position: absolute; left: 3px; top: 3px; width: 6px; height: 6px; border-radius: 50%; background: #5aa5f5; }
.dhr { height: 1px; margin-top: 14px; background: #aaa; }
.btns { display: flex; justify-content: space-between; margin-top: 14px; }
.btn { width: 80px; height: 26px; line-height: 24px; text-align: center; color: #333; background: #fff; border: 1px solid #d4d4d4; border-radius: 3px; }
.btn.pri { color: #fff; background: #2e80e0; border-color: #2e80e0; }

/* magenta annotation frames */
.mark { position: absolute; border: 3px solid #f41ff0; }
.markin { left: -1px; top: 164px; width: 292px; height: 30px; }
.markrib { left: 1380px; top: 23px; width: 96px; height: 30px; }
```
